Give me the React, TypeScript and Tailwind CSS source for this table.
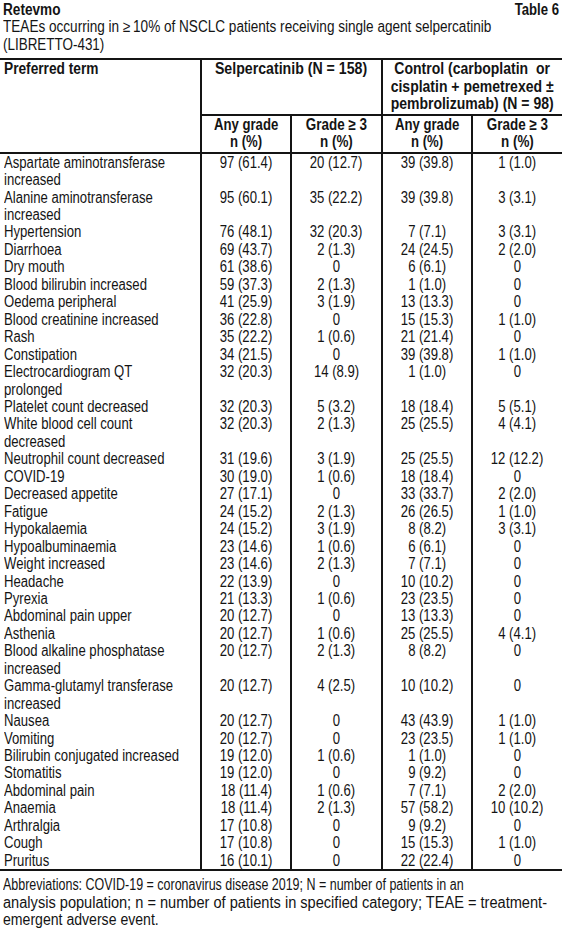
import React from "react";

const rows: string[][] = [
  ["Aspartate aminotransferase\nincreased", "97 (61.4)", "20 (12.7)", "39 (39.8)", "1 (1.0)"],
  ["Alanine aminotransferase\nincreased", "95 (60.1)", "35 (22.2)", "39 (39.8)", "3 (3.1)"],
  ["Hypertension", "76 (48.1)", "32 (20.3)", "7 (7.1)", "3 (3.1)"],
  ["Diarrhoea", "69 (43.7)", "2 (1.3)", "24 (24.5)", "2 (2.0)"],
  ["Dry mouth", "61 (38.6)", "0", "6 (6.1)", "0"],
  ["Blood bilirubin increased", "59 (37.3)", "2 (1.3)", "1 (1.0)", "0"],
  ["Oedema peripheral", "41 (25.9)", "3 (1.9)", "13 (13.3)", "0"],
  ["Blood creatinine increased", "36 (22.8)", "0", "15 (15.3)", "1 (1.0)"],
  ["Rash", "35 (22.2)", "1 (0.6)", "21 (21.4)", "0"],
  ["Constipation", "34 (21.5)", "0", "39 (39.8)", "1 (1.0)"],
  ["Electrocardiogram QT\nprolonged", "32 (20.3)", "14 (8.9)", "1 (1.0)", "0"],
  ["Platelet count decreased", "32 (20.3)", "5 (3.2)", "18 (18.4)", "5 (5.1)"],
  ["White blood cell count\ndecreased", "32 (20.3)", "2 (1.3)", "25 (25.5)", "4 (4.1)"],
  ["Neutrophil count decreased", "31 (19.6)", "3 (1.9)", "25 (25.5)", "12 (12.2)"],
  ["COVID-19", "30 (19.0)", "1 (0.6)", "18 (18.4)", "0"],
  ["Decreased appetite", "27 (17.1)", "0", "33 (33.7)", "2 (2.0)"],
  ["Fatigue", "24 (15.2)", "2 (1.3)", "26 (26.5)", "1 (1.0)"],
  ["Hypokalaemia", "24 (15.2)", "3 (1.9)", "8 (8.2)", "3 (3.1)"],
  ["Hypoalbuminaemia", "23 (14.6)", "1 (0.6)", "6 (6.1)", "0"],
  ["Weight increased", "23 (14.6)", "2 (1.3)", "7 (7.1)", "0"],
  ["Headache", "22 (13.9)", "0", "10 (10.2)", "0"],
  ["Pyrexia", "21 (13.3)", "1 (0.6)", "23 (23.5)", "0"],
  ["Abdominal pain upper", "20 (12.7)", "0", "13 (13.3)", "0"],
  ["Asthenia", "20 (12.7)", "1 (0.6)", "25 (25.5)", "4 (4.1)"],
  ["Blood alkaline phosphatase\nincreased", "20 (12.7)", "2 (1.3)", "8 (8.2)", "0"],
  ["Gamma-glutamyl transferase\nincreased", "20 (12.7)", "4 (2.5)", "10 (10.2)", "0"],
  ["Nausea", "20 (12.7)", "0", "43 (43.9)", "1 (1.0)"],
  ["Vomiting", "20 (12.7)", "0", "23 (23.5)", "1 (1.0)"],
  ["Bilirubin conjugated increased", "19 (12.0)", "1 (0.6)", "1 (1.0)", "0"],
  ["Stomatitis", "19 (12.0)", "0", "9 (9.2)", "0"],
  ["Abdominal pain", "18 (11.4)", "1 (0.6)", "7 (7.1)", "2 (2.0)"],
  ["Anaemia", "18 (11.4)", "2 (1.3)", "57 (58.2)", "10 (10.2)"],
  ["Arthralgia", "17 (10.8)", "0", "9 (9.2)", "0"],
  ["Cough", "17 (10.8)", "0", "15 (15.3)", "1 (1.0)"],
  ["Pruritus", "16 (10.1)", "0", "22 (22.4)", "0"],
];

const font = {
  fontFamily: '"Liberation Sans", Arial, sans-serif',
};

type P = { children: React.ReactNode; className?: string };

// Condensed text: Liberation Sans (Arial metrics) narrowed like Arial Narrow.
function TL({ children, className = "scale-x-82" }: P) {
  return <span className={"block whitespace-pre origin-left " + className}>{children}</span>;
}
function TC({ children, className = "scale-x-82" }: P) {
  return <span className={"block whitespace-pre text-center origin-center " + className}>{children}</span>;
}
function TR({ children, className = "scale-x-82" }: P) {
  return <span className={"block whitespace-pre origin-right " + className}>{children}</span>;
}

export default function App() {
  return (
    <div
      className="w-[562px] h-[933px] bg-white text-[#141414] text-[16px] leading-[17.45px] pt-[1px] overflow-hidden"
      style={font}
    >
      <div className="px-[3px]">
        <div className="flex justify-between font-bold">
          <TL className="scale-x-[0.85]">Retevmo</TL>
          <TR>Table 6</TR>
        </div>
        <div className="flex">
          <TL className="scale-x-[0.848]">
            TEAEs occurring in ≥{"\u2009"}10% of NSCLC patients receiving single agent selpercatinib
          </TL>
        </div>
        <div className="flex">
          <TL className="scale-x-[0.84]">(LIBRETTO-431)</TL>
        </div>
      </div>

      <div className="mt-[5px] grid grid-cols-[200px_90px_91px_90px_91px] border-t-2 border-b-2 border-[#141414] font-bold">
        <div className="row-span-2 flex pl-[4px]">
          <TL className="scale-x-[0.856]">Preferred term</TL>
        </div>
        <div className="col-span-2 flex justify-center border-l-2 border-b-2 border-[#141414]">
          <TC className="scale-x-[0.885]">Selpercatinib (N = 158)</TC>
        </div>
        <div className="col-span-2 flex justify-center border-l-2 border-b-2 border-[#141414] pb-[1px]">
          <TC className="scale-x-[0.875]">{"Control (carboplatin  or\ncisplatin + pemetrexed ±\npembrolizumab) (N = 98)"}</TC>
        </div>
        <div className="flex justify-center border-l-2 border-[#141414] pb-[1px]">
          <TC>{"Any grade\nn (%)"}</TC>
        </div>
        <div className="flex justify-center border-l-2 border-[#141414] pb-[1px]">
          <TC className="scale-x-[0.84]">{"Grade ≥ 3\nn (%)"}</TC>
        </div>
        <div className="flex justify-center border-l-2 border-[#141414] pb-[1px]">
          <TC>{"Any grade\nn (%)"}</TC>
        </div>
        <div className="flex justify-center border-l-2 border-[#141414] pb-[1px]">
          <TC className="scale-x-[0.84]">{"Grade ≥ 3\nn (%)"}</TC>
        </div>
      </div>

      <div className="grid grid-cols-[200px_90px_91px_90px_91px] border-b-2 border-[#141414]">
        {rows.map((r, i) => (
          <React.Fragment key={i}>
            <div className="flex pl-[4px]">
              <TL>{r[0]}</TL>
            </div>
            <div className="flex justify-center border-l-2 border-[#141414]">
              <TC>{r[1]}</TC>
            </div>
            <div className="flex justify-center border-l-2 border-[#141414]">
              <TC>{r[2]}</TC>
            </div>
            <div className="flex justify-center border-l-2 border-[#141414]">
              <TC>{r[3]}</TC>
            </div>
            <div className="flex justify-center border-l-2 border-[#141414]">
              <TC>{r[4]}</TC>
            </div>
          </React.Fragment>
        ))}
      </div>

      <div className="px-[3px] pt-[5px]">
        <div className="flex">
          <TL className="scale-x-[0.78]">
            Abbreviations: COVID-19 = coronavirus disease 2019; N = number of patients in an
          </TL>
        </div>
        <div className="flex">
          <TL className="scale-x-[0.912]">
            analysis population; n = number of patients in specified category; TEAE = treatment-
          </TL>
        </div>
        <div className="flex">
          <TL className="scale-x-[0.88]">emergent adverse event.</TL>
        </div>
      </div>
    </div>
  );
}
